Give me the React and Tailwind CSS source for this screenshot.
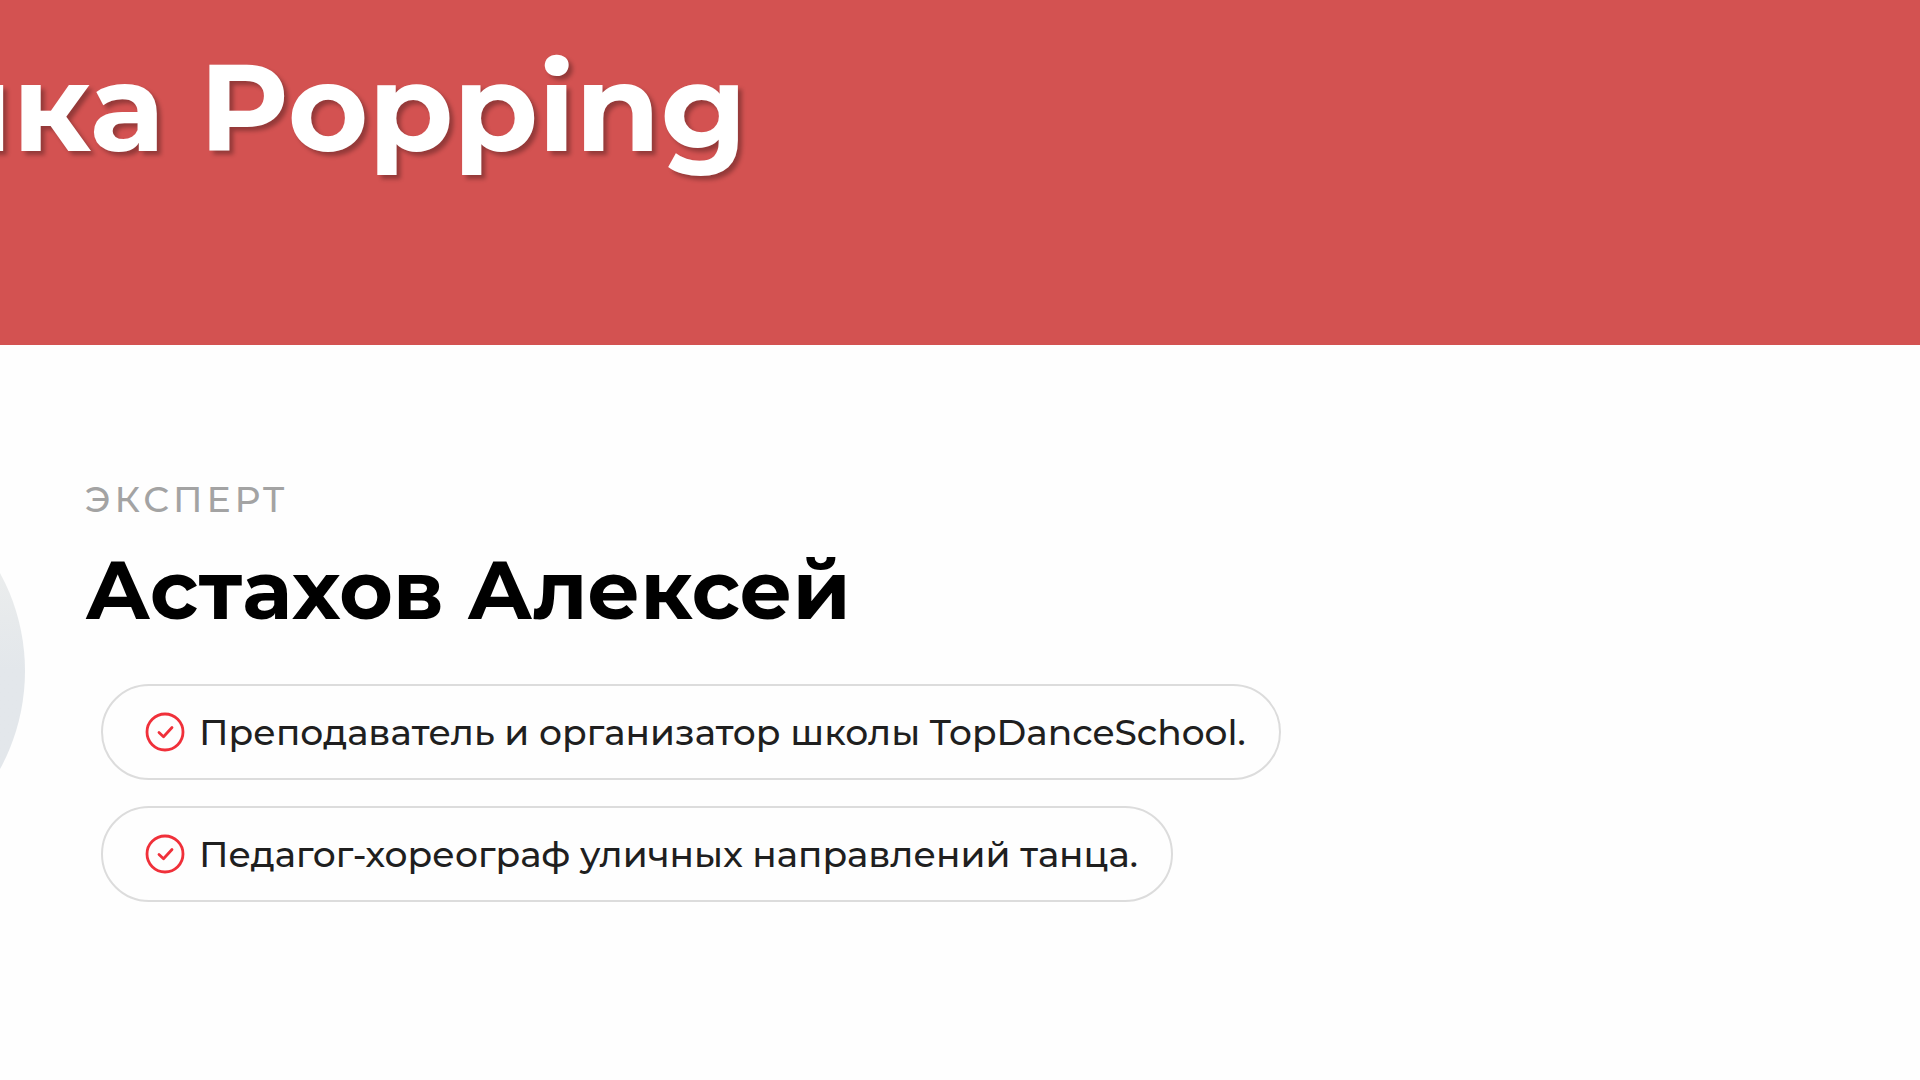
const facts = [
  'Преподаватель и организатор школы TopDanceSchool.',
  'Педагог-хореограф уличных направлений танца.',
];

function CheckCircle() {
  return (
    <svg
      className="size-10 shrink-0 text-[#f0303a]"
      viewBox="0 0 40 40"
      fill="none"
      stroke="currentColor"
      strokeWidth="2.8"
      strokeLinecap="round"
      strokeLinejoin="round"
      aria-hidden="true"
    >
      <circle cx="20" cy="20" r="18" />
      <path d="M14 20.5 18.5 24.8 27 15.5" />
    </svg>
  );
}

export default function App() {
  return (
    <div className="min-h-screen overflow-hidden bg-[#fefefe] font-['Montserrat','Inter',sans-serif] text-black">
      <header className="h-[345px] overflow-hidden bg-[#d35251] pt-8">
        <h1 className="-ml-[75px] whitespace-nowrap text-[123px] leading-[150px] font-bold text-white [text-shadow:4px_4px_4px_rgba(0,0,0,0.3)]">
          ика Popping
        </h1>
      </header>
      <main className="flex items-start gap-[60px] pt-[121px]">
        <div className="-ml-[385px] size-[410px] shrink-0 rounded-full bg-linear-to-b from-[#ebeded] from-25% to-[#e3e7eb] to-50%" />
        <section className="min-w-0 grow pt-2">
          <p className="text-[36px] leading-[50px] font-medium tracking-[4px] text-[#a3a3a3]">ЭКСПЕРТ</p>
          <h2 className="mt-4 text-[82px] leading-[100px] font-bold">Астахов Алексей</h2>
          <ul className="mt-11 ml-4 flex flex-col items-start gap-[26px]">
            {facts.map((fact) => (
              <li
                key={fact}
                className="flex items-center gap-[14px] rounded-full border-2 border-[#dcdcdc] py-[22px] pr-[33px] pl-[42px] text-[36px] leading-[48px] font-medium text-[#1f1f1f]"
              >
                <CheckCircle />
                <span className="whitespace-nowrap">{fact}</span>
              </li>
            ))}
          </ul>
        </section>
      </main>
    </div>
  );
}
